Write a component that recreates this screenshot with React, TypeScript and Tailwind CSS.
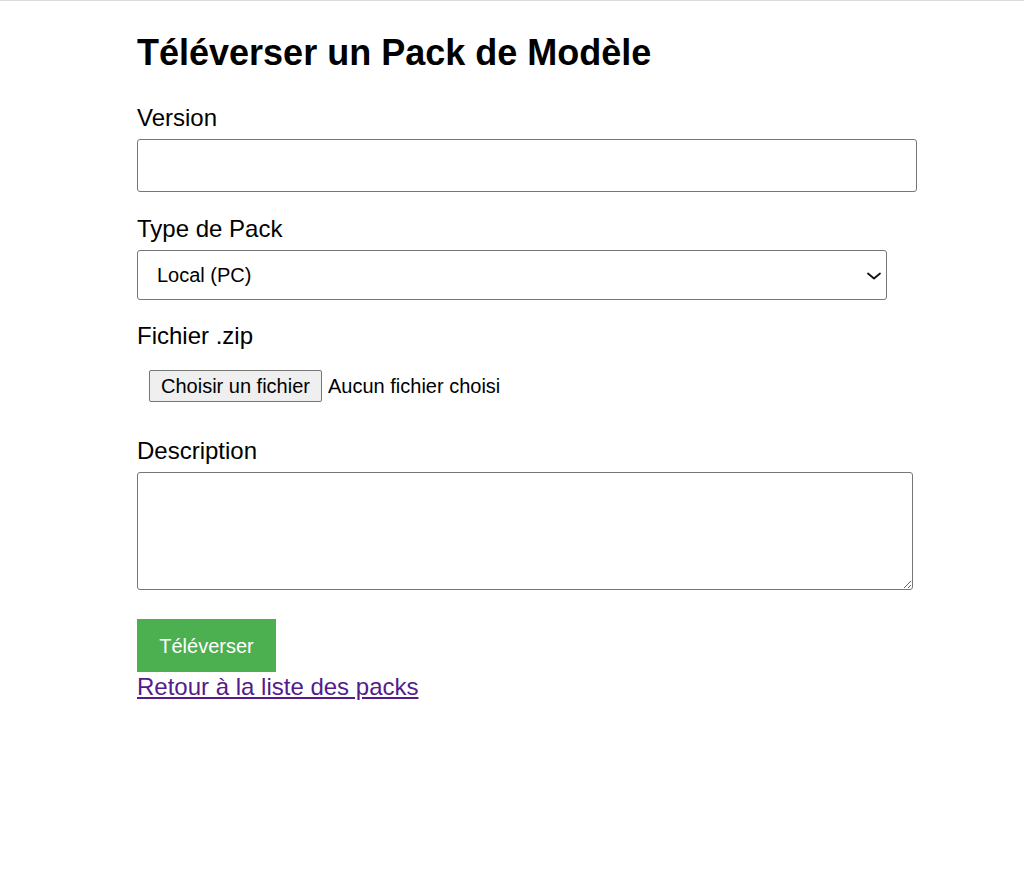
import React from "react";

export default function App() {
  return (
    <div className="min-h-[873px] w-full border-t border-[#dcdcdc] bg-white text-black [font-family:'Liberation_Sans',Arial,sans-serif]">
      <div className="mx-auto w-[750px]">
        <h1 className="mt-[32px] text-[36px] font-bold leading-[40px]">Téléverser un Pack de Modèle</h1>
        <form className="flex flex-col" onSubmit={(e) => e.preventDefault()}>
          <label className="mt-[33px] block text-[24px] leading-[24px]">Version</label>
          <input
            type="text"
            className="mt-[9px] block h-[53px] w-[780px] rounded-[3px] border border-[#767676] bg-white px-[12px] text-[20px] outline-none"
          />

          <label className="mt-[25px] block text-[24px] leading-[24px]">Type de Pack</label>
          <div className="relative mt-[9px] h-[50px] w-[750px]">
            <select className="block h-[50px] w-[750px] appearance-none rounded-[3px] border border-[#767676] bg-white pl-[19px] text-[20px] outline-none">
              <option>Local (PC)</option>
            </select>
            <svg
              className="pointer-events-none absolute left-[729px] top-[22px]"
              width="16"
              height="8"
              viewBox="0 0 16 8"
              fill="none"
            >
              <path d="M2 1.5 L8 6.5 L14 1.5" stroke="#111" strokeWidth="1.8" strokeLinecap="round" strokeLinejoin="round" />
            </svg>
          </div>

          <label className="mt-[24px] block text-[24px] leading-[24px]">Fichier .zip</label>
          <div className="mt-[22px] flex items-center pl-[12px] text-[20px]">
            <span className="flex h-[32px] w-[173px] items-center justify-center rounded-[2px] border border-[#767676] bg-[#efefef] text-[20px]">
              Choisir un fichier
            </span>
            <span className="ml-[6px]">Aucun fichier choisi</span>
          </div>

          <label className="mt-[37px] block text-[24px] leading-[24px]">Description</label>
          <textarea className="mt-[9px] block h-[118px] w-[776px] resize-y rounded-[3px] border border-[#767676] bg-white p-[12px] text-[20px] outline-none" />

          <div className="mt-[29px]">
            <button
              type="submit"
              className="flex h-[53px] w-[139px] items-center justify-center bg-[#4CAF50] text-[20px] text-white"
            >
              Téléverser
            </button>
          </div>
        </form>
        <a href="#" className="mt-[3px] inline-block text-[24px] leading-[24px] text-[#551A8B] underline">
          Retour à la liste des packs
        </a>
      </div>
    </div>
  );
}
